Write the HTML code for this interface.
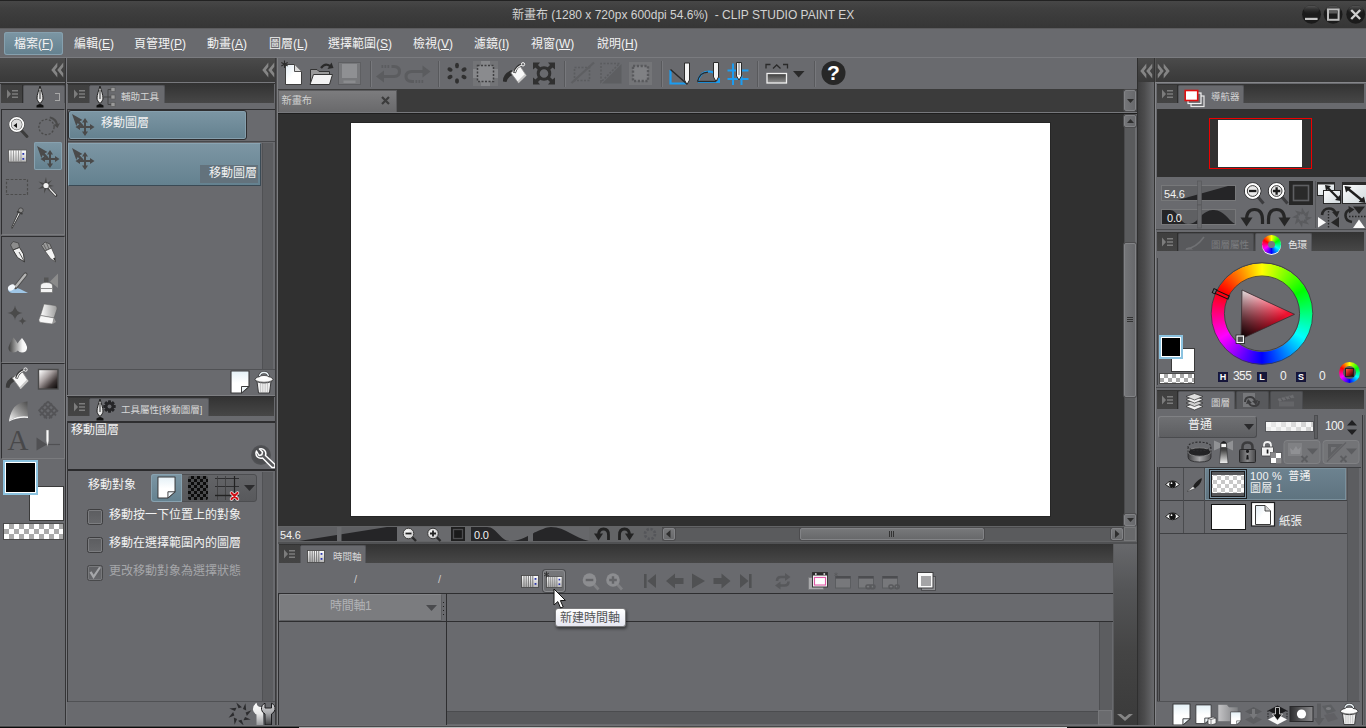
<!DOCTYPE html>
<html lang="zh-Hant">
<head>
<meta charset="utf-8">
<title>CLIP STUDIO PAINT EX</title>
<style>
html,body{margin:0;padding:0;}
body{width:1366px;height:728px;overflow:hidden;position:relative;background:#696a6e;
 font-family:"Liberation Sans","Noto Sans CJK TC",sans-serif;color:#f2f2f2;font-size:12px;}
.a{position:absolute;}
.t{position:absolute;white-space:nowrap;line-height:1;}
svg{position:absolute;overflow:visible;}
.dk{background:linear-gradient(#333,#474747);}
.strip{background:linear-gradient(#4b4b4b 0,#424242 45%,#393939 100%);}
.pm{position:absolute;width:21px;height:18px;background:linear-gradient(#3f3f3f,#444);border-right:1px solid #2e2e2e;}
.tab{position:absolute;background:#696a6e;border:1px solid #55565a;border-bottom:none;border-radius:2px 2px 0 0;box-sizing:border-box;}
.tabi{position:absolute;background:#58595c;border:1px solid #4a4b4e;border-bottom:none;border-radius:2px 2px 0 0;box-sizing:border-box;}
.ln{position:absolute;background:#3b3b3d;}
.ll{position:absolute;background:#7d7e82;}
.cb{width:16px;height:16px;box-sizing:border-box;border:1px solid #3e3e40;border-radius:2.500px;background:linear-gradient(#5c5d60,#67686b);box-shadow:inset 0 0 0 1px #7c7d80;}
.sb{box-sizing:border-box;background:linear-gradient(90deg,#747578,#68696c);border:1px solid #828386;border-radius:2px;box-shadow:0 0 0 1px #4c4c4e;}
.hls{width:10px;height:10px;background:#16163a;color:#fff;font-size:9px;line-height:10px;text-align:center;font-weight:bold;font-family:'Liberation Sans',sans-serif;}
.sel{background:linear-gradient(#7c96a4,#64818f);}
</style>
</head>
<body>

<!-- ===== TITLE BAR ===== -->
<div class="a" id="title" style="left:0;top:0;width:1366px;height:29px;background:linear-gradient(#484848 0,#3f3f3f 30%,#353535 100%);"></div>
<div class="a" style="left:0;top:28px;width:1366px;height:1px;background:#5c5c5e;"></div>
<div class="t" style="left:512px;top:9px;font-size:12px;color:#d2d2d2;">新畫布 (1280 x 720px 600dpi 54.6%)&nbsp; - CLIP STUDIO PAINT EX</div>

<svg style="left:1296px;top:0" width="70" height="29">
 <defs><linearGradient id="gBtn" x1="0" y1="0" x2="0" y2="1"><stop offset="0" stop-color="#5a5a5a"/><stop offset="1" stop-color="#2a2a2a" stop-opacity="0"/></linearGradient></defs>
 <circle cx="15.500" cy="14.300" r="9.400" fill="#1b1b1b"/><circle cx="37.100" cy="14.300" r="9.400" fill="#1b1b1b"/><circle cx="59.700" cy="14.300" r="9.400" fill="#1b1b1b"/>
 <ellipse cx="15.500" cy="10" rx="7.600" ry="4.600" fill="url(#gBtn)"/><ellipse cx="37.100" cy="10" rx="7.600" ry="4.600" fill="url(#gBtn)"/><ellipse cx="59.700" cy="10" rx="7.600" ry="4.600" fill="url(#gBtn)"/>
 <rect x="9" y="17.800" width="12.600" height="2.200" fill="#c6c6c6"/>
 <rect x="32" y="9.500" width="10.600" height="10.300" fill="#1a1a1a" stroke="#bcbcbc" stroke-width="2"/><rect x="33" y="10.500" width="8.600" height="3" fill="#5a5a5a"/>
 <path d="M55.200 10 L64.200 19 M64.200 10 L55.200 19" stroke="#cdcdcd" stroke-width="2.400"/>
</svg>
<div class="a" style="left:0;top:0;width:1366px;height:1px;background:#222;"></div>

<!-- ===== MENU BAR ===== -->
<div class="a" id="menu" style="left:0;top:29px;width:1366px;height:29px;background:#696a6e;"></div>
<div class="a sel" style="left:4px;top:32px;width:59px;height:23px;border-radius:3px;box-shadow:inset 0 0 0 1px #86a0ae;"></div>
<div class="t" style="left:14px;top:38px;font-size:12px;">檔案(<u>F</u>)</div>
<div class="t" style="left:74px;top:38px;font-size:12px;">編輯(<u>E</u>)</div>
<div class="t" style="left:134px;top:38px;font-size:12px;">頁管理(<u>P</u>)</div>
<div class="t" style="left:207px;top:38px;font-size:12px;">動畫(<u>A</u>)</div>
<div class="t" style="left:269px;top:38px;font-size:12px;">圖層(<u>L</u>)</div>
<div class="t" style="left:328px;top:38px;font-size:12px;">選擇範圍(<u>S</u>)</div>
<div class="t" style="left:413px;top:38px;font-size:12px;">檢視(<u>V</u>)</div>
<div class="t" style="left:474px;top:38px;font-size:12px;">濾鏡(<u>I</u>)</div>
<div class="t" style="left:531px;top:38px;font-size:12px;">視窗(<u>W</u>)</div>
<div class="t" style="left:597px;top:38px;font-size:12px;">說明(<u>H</u>)</div>

<!-- ===== DOCK HEADERS (y 58-82) ===== -->
<div class="a" style="left:0;top:57px;width:1366px;height:1px;background:#7a7b7f;"></div>
<div class="a strip" style="left:0;top:58px;width:66px;height:24px;"></div>
<div class="a strip" style="left:67px;top:58px;width:208px;height:24px;"></div>
<div class="a" style="left:65px;top:58px;width:1px;height:667px;background:#343436;"></div><div class="a" style="left:66px;top:58px;width:1px;height:667px;background:#77787c;"></div>
<div class="a" style="left:0;top:82px;width:65px;height:1px;background:#77787c;"></div><div class="a" style="left:67px;top:82px;width:209px;height:1px;background:#77787c;"></div><div class="a" style="left:0;top:83px;width:65px;height:1px;background:#333;"></div><div class="a" style="left:67px;top:83px;width:209px;height:1px;background:#333;"></div>


<!-- ===== shared svg symbols ===== -->
<svg width="0" height="0" style="left:0;top:0">
 <defs>
  <symbol id="pmenu" viewBox="0 0 22 18"><path d="M6 4.5 L10 9 L6 13.5 Z" fill="#7c7c7c"/><path d="M11 5h6v1.400h-6zM11 8.300h6v1.400h-6zM11 11.600h6v1.400h-6z" fill="#7c7c7c"/></symbol>
  <symbol id="chevL" viewBox="0 0 14 16"><path d="M6.800 0 L0.300 8 L6.800 16 L6.800 11.500 L4.200 8 L6.800 4.500Z M13.200 0 L6.700 8 L13.200 16 L13.200 11.500 L10.600 8 L13.200 4.500Z" fill="#858585"/></symbol>
  <symbol id="chevR" viewBox="0 0 14 16"><path d="M0.800 0 L7.300 8 L0.800 16 L0.800 11.500 L3.400 8 L0.800 4.500Z M7.200 0 L13.700 8 L7.200 16 L7.200 11.500 L9.800 8 L7.200 4.500Z" fill="#858585"/></symbol>
  <symbol id="pen" viewBox="0 0 10 22"><path d="M5 0 C3.5 5 2 9 2 12 C2 14.500 3.500 15.500 4.200 17 L5.800 17 C6.500 15.500 8 14.500 8 12 C8 9 6.500 5 5 0Z" fill="#e8e8e8" stroke="#222" stroke-width="1"/><path d="M5 4 L5 13" stroke="#333" stroke-width="1"/><path d="M1.500 19.500 Q5 16.500 8.500 19.500 L8.500 21.500 L1.500 21.500Z" fill="#111"/></symbol>
  <symbol id="mvl" viewBox="0 0 24 24"><path d="M1 2 L11.500 8 L8.600 9.300 L12.600 13.600 L10.600 15.200 L6.800 10.900 L5.300 14Z" fill="#4a4a4a"/><path d="M14 6 L17 10.500 L15 10.500 L15 14 L19 14 L19 12 L23.500 15 L19 18 L19 16 L15 16 L15 19.500 L17 19.500 L14 24 L11 19.500 L13 19.500 L13 16 L9 16 L9 18 L4.500 15 L9 12 L9 14 L13 14 L13 10.500 L11 10.500Z" fill="#4a4a4a"/></symbol>
  <linearGradient id="gPaper" x1="0" y1="0" x2="0" y2="1"><stop offset="0" stop-color="#e4f0f6"/><stop offset=".55" stop-color="#ffffff"/><stop offset="1" stop-color="#ffffff"/></linearGradient>
  <symbol id="paper" viewBox="0 0 20 24"><path d="M1 1 L19 1 L19 16.500 L11.500 23 L1 23Z" fill="url(#gPaper)" stroke="#3a3a3c" stroke-width="1.100" stroke-linejoin="round"/><path d="M11.500 23 L11.500 16.500 L19 16.500Z" fill="#eef5f8" stroke="#3a3a3c" stroke-width="1" stroke-linejoin="round"/></symbol>
  <symbol id="trash" viewBox="0 0 20 23"><path d="M5.500 6 Q5.500 1.500 10 1.500 Q14.500 1.500 14.500 6" fill="none" stroke="#3a3a3c" stroke-width="2.600"/><path d="M5.500 6 Q5.500 1.500 10 1.500 Q14.500 1.500 14.500 6" fill="none" stroke="#e6eef2" stroke-width="1.300"/><path d="M3 10.500 L17 10.500 L15.500 22 L4.500 22Z" fill="#ececec" stroke="#3a3a3c" stroke-width="1"/><path d="M6.500 12v9M8.800 12v9M11.200 12v9M13.500 12v9" stroke="#c4c4c4" stroke-width=".9"/><ellipse cx="10" cy="8.500" rx="9" ry="3.400" fill="#fafafa" stroke="#3a3a3c" stroke-width="1"/><path d="M1.500 9.500 Q10 13 18.500 9.500" fill="none" stroke="#555" stroke-width=".7"/><ellipse cx="10" cy="6.300" rx="4" ry="1.400" fill="#fff"/></symbol>
  <symbol id="wrench" viewBox="0 0 22 22"><path d="M3.500 4 Q2 7.500 4.500 10 Q6.500 11.800 9.500 11 L19 20.500 L22 20.500 L22 17.500 L12.500 8.500 Q13.500 5.500 11.500 3.300 Q9.500 1.200 6.500 2 L9.500 5 L8.800 7.800 L6 8.500 L3.500 4Z" fill="#58595c" stroke="#fff" stroke-width="1.500" stroke-linejoin="round"/></symbol>
 </defs>
</svg>

<!-- ===== LEFT: TOOL PALETTE (x 0-65) ===== -->
<svg style="left:51px;top:62px" width="13" height="16"><use href="#chevL"/></svg>
<svg style="left:262px;top:62px" width="13" height="16"><use href="#chevL"/></svg>
<div class="a dk" style="left:1px;top:84px;width:64px;height:19px;"></div>
<div class="pm" style="left:1px;top:85px;"><svg width="22" height="18" style="left:0;top:0"><use href="#pmenu"/></svg></div>
<div class="tab" style="left:23px;top:85px;width:42px;height:18px;"></div>
<svg style="left:35px;top:86px" width="10" height="22"><use href="#pen"/></svg>
<div class="a" style="left:55px;top:93px;width:4px;height:6px;border:1px solid #a8a8a8;border-left:none;"></div>
<!-- tool group boxes -->
<div class="a" style="left:1px;top:109px;width:64px;height:126px;border:1px solid #2e2e30;border-right-color:#7a7b7e;border-bottom-color:#7a7b7e;box-sizing:border-box;"></div>
<div class="a" style="left:1px;top:236px;width:64px;height:127px;border:1px solid #2e2e30;border-right-color:#7a7b7e;border-bottom-color:#7a7b7e;box-sizing:border-box;"></div>
<div class="a" style="left:1px;top:363px;width:64px;height:96px;border:1px solid #2e2e30;border-right-color:#7a7b7e;border-bottom-color:#7a7b7e;box-sizing:border-box;"></div>
<!-- selected tool -->
<div class="a sel" style="left:34px;top:142px;width:28px;height:28px;border-radius:2px;box-shadow:inset 0 0 0 1px #87a1af;"></div>

<svg style="left:0;top:0" width="66" height="460">
 <defs>
  <linearGradient id="gW" x1="0" y1="0" x2="0" y2="1"><stop offset="0" stop-color="#fff"/><stop offset="1" stop-color="#b8b8b8"/></linearGradient>
  <linearGradient id="gWh" x1="0" y1="0" x2="1" y2="0"><stop offset="0" stop-color="#fff"/><stop offset="1" stop-color="#9a9a9a"/></linearGradient>
  <linearGradient id="gBK" x1="0" y1="0" x2="1" y2="1"><stop offset="0.05" stop-color="#fff"/><stop offset=".4" stop-color="#a8a0a0"/><stop offset=".72" stop-color="#3a3232"/><stop offset="1" stop-color="#050303"/></linearGradient>
  <linearGradient id="gDrop" x1="0" y1="0" x2="1" y2="0"><stop offset="0" stop-color="#3c3c3c"/><stop offset=".75" stop-color="#f4f4f4"/><stop offset="1" stop-color="#fff"/></linearGradient>
  <linearGradient id="gFig" x1="0" y1="1" x2="1" y2="0"><stop offset="0" stop-color="#fafafa"/><stop offset=".45" stop-color="#9d9d9d"/><stop offset="1" stop-color="#4a4a4a"/></linearGradient>
 </defs>
 <!-- magnifier -->
 <path d="M21 130 L27 136.500" stroke="#3c3c3c" stroke-width="3" stroke-linecap="round"/>
 <circle cx="16.700" cy="124.500" r="6.600" fill="#dcdcdc" stroke="#3f3f3f" stroke-width="2.800"/>
 <circle cx="16.700" cy="124.500" r="6.600" fill="none" stroke="#fff" stroke-width="1.800"/>
 <path d="M13.500 125.500 L17 123 L17 128Z" fill="#111"/>
 <!-- rotate -->
 <circle cx="46.500" cy="127" r="7.600" fill="none" stroke="#4a4a4a" stroke-width="1.300" stroke-dasharray="2.200 1.600"/>
 <path d="M50 116.500 Q57 118 58 124 L60 123 L57.500 128 L53.500 124.500 L55.800 124.300 Q55 120 49.500 118.200Z" fill="#4a4a4a"/>
 <!-- film -->
 <rect x="8.500" y="150" width="18" height="12" fill="url(#gW)" stroke="#555" stroke-width=".8"/>
 <path d="M11 150v12M13.500 150v12M16 150v12M18.500 150v12M21 150v12" stroke="#8a8a8a" stroke-width=".8"/>
 <rect x="22.400" y="153" width="1.800" height="1.800" fill="#2a35b0"/><rect x="22.400" y="158" width="1.800" height="1.800" fill="#2a35b0"/>
 <!-- move layer (selected) -->
 <use href="#mvl" x="36" y="144" width="24" height="24"/>
 <!-- dashed rect -->
 <rect x="6.500" y="179.500" width="21" height="15" fill="none" stroke="#4c4c4c" stroke-width="1.200" stroke-dasharray="2.600 1.600"/>
 <!-- magic wand -->
 <path d="M48 187 L56 195.500" stroke="#3e3e3e" stroke-width="2.600" stroke-linecap="round"/>
 <path d="M48.500 187.500 L55.500 195" stroke="#ececec" stroke-width="1.200" stroke-linecap="round"/>
 <path d="M46 177 L47 183 L52 180 L48.500 184.500 L54 186 L48.500 187 L50.500 192 L46.500 188.500 L44 193.500 L44.200 188 L38 189 L43 185.500 L38.500 181.500 L44.200 183.200Z" fill="#4a4a4a"/>
 <circle cx="46" cy="185.500" r="2.600" fill="#f2f2f2"/>
 <!-- eyedropper -->
 <path d="M20.500 213 L12 228.500 L11.500 227.500 L18.500 212Z" fill="#e4e4e4" stroke="#3c3c3c" stroke-width="1"/>
 <path d="M17 211.500 L22.500 214" stroke="#3c3c3c" stroke-width="1.600"/>
 <circle cx="20.800" cy="210.300" r="2.400" fill="#8a8a8a" stroke="#3c3c3c" stroke-width=".8"/>

 <!-- pen nib -->
 <path d="M10.500 245 L13 241.500 L18.500 243 L19.500 247.500 L13 250Z" fill="#8c8c8c" stroke="#444" stroke-width=".8"/>
 <path d="M13 250 L19.500 247.500 L23.500 254 L24.500 262 L17.500 257.500Z" fill="#f0f0f0" stroke="#3a3a3a" stroke-width="1"/>
 <path d="M19 252 L24 261" stroke="#444" stroke-width=".9"/>
 <!-- pencil -->
 <path d="M41.500 245.500 L45 242 L50 244 L51.500 248 L45 251Z" fill="#9a9a9a" stroke="#444" stroke-width=".8"/>
 <path d="M43.500 244 L46.500 250M46.500 243 L49 249" stroke="#555" stroke-width=".8"/>
 <path d="M45 251 L51.500 248 L55 256 L55.500 262 L50.500 258.500Z" fill="#f4f4f4" stroke="#4a4a4a" stroke-width=".8"/>
 <path d="M53 258.500 L55.500 262 L55.200 257.500Z" fill="#333"/>
 <!-- brush -->
 <path d="M8 289 Q14 286 20 289 L28 293 L12 293 Q8 292 8 289Z" fill="#9fc6e6"/>
 <path d="M25.500 274.500 L15.500 287" stroke="#4c4c4c" stroke-width="4.200" stroke-linecap="round"/>
 <path d="M25.300 274.700 L16 286.300" stroke="#b4b4b4" stroke-width="2.400" stroke-linecap="round"/>
 <ellipse cx="11.500" cy="287.500" rx="3.800" ry="2.800" fill="#f4f8fc" transform="rotate(-35 11.500 287.500)"/>
 <!-- airbrush -->
 <path d="M50 281.500 L58 273.500 L58 288Z" fill="#8b8b8b"/>
 <rect x="44" y="277.500" width="4.500" height="5" fill="#555"/>
 <path d="M40.500 286 Q40.500 282.500 46.500 282.500 Q52.500 282.500 52.500 286 L52.500 292.500 L40.500 292.500Z" fill="#f4f4f4" stroke="#6a6a6a" stroke-width=".6"/>
 <path d="M40.500 288.500 L52.500 288.500" stroke="#8a8a8a" stroke-width="1"/>
 <!-- sparkles -->
 <path d="M15 305.500 Q15.800 312.200 22.500 313 Q15.800 313.800 15 320.500 Q14.200 313.800 7.500 313 Q14.200 312.200 15 305.500Z" fill="#4a4a4a"/>
 <path d="M22.500 317 Q23 320.500 26.500 321 Q23 321.500 22.500 325 Q22 321.500 18.500 321 Q22 320.500 22.500 317Z" fill="#4a4a4a"/>
 <!-- eraser -->
 <path d="M44 304 L55 305.500 Q57.500 306 57 309 L54 318 L40.500 315.500Z" fill="url(#gWh)" stroke="#5a5a5a" stroke-width=".5"/>
 <path d="M40.500 315.500 L54 318 L52.500 324 L41 322.500 Q38.500 322 39 319.500Z" fill="#f6f6f6" stroke="#6a6a6a" stroke-width=".5"/>
 <path d="M52.500 324 L56 322 L54 318Z" fill="#9a9a9a"/>
 <!-- blend drops -->
 <path d="M13.500 337.500 Q17 342 17.500 343.500 Q19 341 22 338 Q27.500 345 27 348.500 Q26.500 352.500 22 352.500 Q19 352.500 17.800 350.500 Q16.500 352.500 13 352.500 Q8.500 352 8.500 348 Q9 343.500 13.500 337.500Z" fill="url(#gDrop)"/>

 <!-- bucket -->
 <path d="M5.800 387.500 Q5.300 380 14 376 L16.500 380.500 Q10 382.500 9.200 388Z" fill="#3a3a3a"/>
 <path d="M12.300 378 L22 371.300 L28.300 381 L20.500 389 Z" fill="#f8f8f8" stroke="#8a8a8a" stroke-width=".8" stroke-linejoin="round"/>
 <path d="M20.500 389 L28.300 381 L27 379.500 L19.800 387Z" fill="#c9c9c9"/>
 <path d="M16.500 378.500 Q18 371.500 25 369.800" fill="none" stroke="#333" stroke-width="2.800"/>
 <path d="M16.800 378 Q18.500 372 25 370.300" fill="none" stroke="#efefef" stroke-width="1.100"/>
 <circle cx="25.500" cy="369.600" r="1.700" fill="#6a6b6e" stroke="#f0f0f0" stroke-width="1"/>
 <!-- gradient square -->
 <rect x="38.500" y="369.500" width="19.500" height="19.500" fill="url(#gBK)" stroke="#4a4a4a" stroke-width="1.400"/>
 <!-- figure curve -->
 <path d="M27.500 401.500 Q12 402 9 420.500 Q18 415 28 416.500 Q27 409 27.500 401.500Z" fill="url(#gFig)"/>
 <path d="M9 420.500 Q18 415 28 416.500 L28 418 Q18 417 9 421.500Z" fill="#fafafa"/>
 <!-- hatch -->
 <g stroke="#515154" stroke-width="1.800" opacity=".85"><path d="M41 407 L52 418M44 403.500 L56 415.500M48 401.500 L58 411.500M39.500 411 L47 418.500"/><path d="M55 407 L44 418M52 403.500 L40 415.500M48 401.500 L38.500 411M56.500 411 L49 418.500"/></g>
 <!-- correct line -->
 <path d="M36.500 437.500 L47 444.500 L36.500 450.500Z" fill="#505053"/>
 <path d="M47 444.500 L60 444.500" stroke="#505053" stroke-width="1.200"/>
 <path d="M46.200 430 L48.800 430 L48.800 441 L47.500 446.500 L46.200 441Z" fill="#fafafa" stroke="#777" stroke-width=".4"/>
</svg>
<div class="t" style="left:7.500px;top:426px;font-family:'Liberation Serif',serif;font-size:29px;color:#48484a;">A</div>


<!-- colour swatches -->
<div class="a" style="left:29px;top:486px;width:35px;height:35px;background:#fff;border:1px solid #3a3a3a;box-sizing:border-box;"></div>
<div class="a" style="left:3px;top:460px;width:35px;height:35px;background:#000;border:2px solid #8cc3e0;box-shadow:inset 0 0 0 1px #fff;box-sizing:border-box;"></div>
<div class="a" style="left:3px;top:523px;width:61px;height:17px;border:1px solid #4a4a4a;box-sizing:border-box;background-color:#fff;background-image:linear-gradient(45deg,#a9a9a9 25%,transparent 25%,transparent 75%,#a9a9a9 75%),linear-gradient(45deg,#a9a9a9 25%,transparent 25%,transparent 75%,#a9a9a9 75%);background-size:10px 10px;background-position:0 0,5px 5px;"></div>

<!-- ===== LEFT: SUB TOOL PANEL (x 67-276) ===== -->
<div class="a dk" style="left:68px;top:84px;width:206px;height:19px;"></div>
<div class="pm" style="left:68px;top:85px;"><svg width="22" height="18" style="left:0;top:0"><use href="#pmenu"/></svg></div>
<div class="tab" style="left:89px;top:85px;width:76px;height:18px;"></div>
<svg style="left:95px;top:86px" width="10" height="22"><use href="#pen"/></svg>
<svg style="left:104px;top:87px" width="14" height="20"><path d="M0 10h4M4 2.500h3M4 10h3M4 17.500h3M4 2.500v15" stroke="#444" stroke-width="1" fill="none"/><rect x="7" y="0.500" width="4" height="4" fill="#9a9a9a" stroke="#555" stroke-width=".6"/><rect x="7" y="8" width="4" height="4" fill="#9a9a9a" stroke="#555" stroke-width=".6"/><rect x="7" y="15.500" width="4" height="4" fill="#9a9a9a" stroke="#555" stroke-width=".6"/></svg>
<div class="t" style="left:121px;top:92px;font-size:9.500px;color:#d6d6d6;">輔助工具</div>
<div class="a" style="left:67px;top:109px;width:208px;height:1px;background:#2e2e30;"></div><div class="a" style="left:67px;top:109px;width:1px;height:286px;background:#353537;"></div>

<!-- group box -->
<div class="a sel" style="left:68px;top:110px;width:179px;height:30px;border-radius:3px;border:1px solid #2e2e30;box-sizing:border-box;box-shadow:inset 0 0 0 1px #869fad;"></div>
<svg style="left:71px;top:112px" width="24" height="24"><use href="#mvl"/></svg>
<div class="t" style="left:101px;top:117px;font-size:12px;">移動圖層</div>
<div class="a" style="left:68px;top:141px;width:207px;height:1px;background:#47484b;"></div>
<!-- sub tool item -->
<div class="a sel" style="left:68px;top:143px;width:193px;height:43px;border:1px solid #3a4a55;border-top-color:#8aa4b2;border-left-color:#8aa4b2;box-sizing:border-box;"></div>
<svg style="left:71px;top:146px" width="24" height="24"><use href="#mvl"/></svg>
<div class="a" style="left:200px;top:165px;width:58px;height:18px;background:#63727c;"></div>
<div class="t" style="left:209px;top:167px;font-size:12px;">移動圖層</div>
<div class="a" style="left:262px;top:143px;width:11px;height:226px;background:#5c5d60;border-left:1px solid #505154;box-sizing:border-box;"></div>
<div class="a" style="left:68px;top:369px;width:207px;height:1px;background:#505154;"></div>
<svg style="left:230px;top:370px" width="20" height="24"><use href="#paper"/></svg>
<svg style="left:254px;top:371px" width="20" height="23"><use href="#trash"/></svg>
<div class="a" style="left:67px;top:395px;width:208px;height:1px;background:#7e7f82;"></div><div class="a" style="left:67px;top:396px;width:208px;height:1px;background:#2e2e30;"></div>

<!-- ===== LEFT: TOOL PROPERTY PANEL ===== -->
<div class="a dk" style="left:68px;top:397px;width:206px;height:19px;"></div>
<div class="pm" style="left:68px;top:398px;"><svg width="22" height="18" style="left:0;top:0"><use href="#pmenu"/></svg></div>
<div class="tab" style="left:89px;top:398px;width:120px;height:18px;"></div>
<svg style="left:95px;top:399px" width="10" height="22"><use href="#pen"/></svg>
<svg style="left:103px;top:400px" width="13" height="13"><g fill="#252527"><circle cx="6.500" cy="6.500" r="4.600"/><g id="gt"><rect x="5" y="0.300" width="3" height="12.400" rx=".4"/><rect x="5" y="0.300" width="3" height="12.400" rx=".4" transform="rotate(45 6.500 6.500)"/><rect x="5" y="0.300" width="3" height="12.400" rx=".4" transform="rotate(90 6.500 6.500)"/><rect x="5" y="0.300" width="3" height="12.400" rx=".4" transform="rotate(135 6.500 6.500)"/></g></g><circle cx="6.500" cy="6.500" r="2" fill="#696a6e"/></svg>
<div class="t" style="left:121px;top:405px;font-size:9.500px;color:#d6d6d6;">工具屬性[移動圖層]</div>
<div class="a" style="left:67px;top:421px;width:208px;height:2px;background:#2e2e30;"></div><div class="a" style="left:67px;top:421px;width:1px;height:281px;background:#353537;"></div>

<div class="t" style="left:71px;top:424px;font-size:12px;">移動圖層</div>
<div class="a" style="left:68px;top:469px;width:207px;height:2px;background:#2a2a2c;"></div>
<div class="t" style="left:88px;top:479px;font-size:12px;">移動對象</div>
<div class="a" style="left:151px;top:474px;width:106px;height:28px;border-radius:3px;background:linear-gradient(#636467,#58595c);border:1px solid #4c4d50;box-sizing:border-box;"></div>
<div class="a sel" style="left:151px;top:474px;width:31px;height:28px;border-radius:3px 0 0 3px;box-shadow:inset 0 0 0 1px #88a2b0;"></div>
<div class="a" style="left:251px;top:445px;width:20px;height:20px;border-radius:50%;background:radial-gradient(circle,#4c4d50 55%,#5f6063 100%);"></div>
<svg style="left:253px;top:447px" width="22" height="22"><use href="#wrench"/></svg>
<svg style="left:157px;top:475px" width="19" height="25"><use href="#paper" width="19" height="25"/></svg>
<div class="a" style="left:188px;top:476px;width:20px;height:24px;background-color:#4a4b4d;background-image:linear-gradient(45deg,#0c0c0c 25%,transparent 25%,transparent 75%,#0c0c0c 75%),linear-gradient(45deg,#0c0c0c 25%,transparent 25%,transparent 75%,#0c0c0c 75%);background-size:6px 6px;background-position:0 0,3px 3px;border-radius:2px;"></div>
<svg style="left:214px;top:475px" width="44" height="26"><path d="M1 3.500h24M1 11.500h24M1 20.500h24" stroke="#2e2e30" stroke-width="1"/><path d="M3.500 1v24M11.500 1v24" stroke="#3c3c3e" stroke-width=".8"/><path d="M20.500 1v24" stroke="#222" stroke-width="1.200"/><path d="M1 20.500h17" stroke="#222" stroke-width="1.400"/><path d="M17.500 18 L23.500 24 M23.500 18 L17.500 24" stroke="#fff" stroke-width="3.400" stroke-linecap="round"/><path d="M17.500 18 L23.500 24 M23.500 18 L17.500 24" stroke="#d01218" stroke-width="2.200" stroke-linecap="round"/><path d="M30 10 L41 10 L35.500 16Z" fill="#2c2c2e"/></svg>
<!-- prop bottom icons -->
<svg style="left:228px;top:702px" width="24" height="24"><g fill="#2c2c2e"><path d="M12 0.500 L14 7.500 L10.500 6.500Z" transform="rotate(10 12 12) translate(3.5 0)"/><path d="M12 0.500 L14 7.500 L10.500 6.500Z" transform="rotate(55 12 12) translate(3.5 0)"/><path d="M12 0.500 L14 7.500 L10.500 6.500Z" transform="rotate(100 12 12) translate(3.5 0)"/><path d="M12 0.500 L14 7.500 L10.500 6.500Z" transform="rotate(145 12 12) translate(3.5 0)"/><path d="M12 0.500 L14 7.500 L10.500 6.500Z" transform="rotate(190 12 12) translate(3.5 0)"/><path d="M12 0.500 L14 7.500 L10.500 6.500Z" transform="rotate(235 12 12) translate(3.5 0)"/><path d="M12 0.500 L14 7.500 L10.500 6.500Z" transform="rotate(280 12 12) translate(3.5 0)"/><path d="M12 0.500 L14 7.500 L10.500 6.500Z" transform="rotate(325 12 12) translate(3.5 0)"/></g></svg>
<svg style="left:252px;top:702px" width="24" height="24"><defs><linearGradient id="gWr1" x1="0" y1="0" x2="0" y2="1"><stop offset="0" stop-color="#fff"/><stop offset=".5" stop-color="#e8e8e8"/><stop offset="1" stop-color="#98999c"/></linearGradient><linearGradient id="gWr2" x1="0" y1="0" x2="0" y2="1"><stop offset="0" stop-color="#d8d8da"/><stop offset=".45" stop-color="#a8a9ac"/><stop offset="1" stop-color="#3c3c3e"/></linearGradient></defs>
<path d="M4.500 0.800 Q0.500 3.500 1 8 Q1.500 11 4.500 12.500 L4.500 23 L11 23 L11 12.500 L11 5 L8 5 Q5 4.500 4.500 0.800Z" fill="url(#gWr1)"/>
<path d="M13 1.200 Q9 3 9.500 7.500 Q10 10.500 13 12 L13 23 L19.500 23 L19.500 12 Q22.500 10.500 23 7.500 Q23.500 3 19.500 1.200 L19.500 6 L13 6Z" fill="url(#gWr2)" stroke="#1c1c1e" stroke-width="1" stroke-linejoin="round"/></svg>
<div class="a cb" style="left:87px;top:509px;"></div>
<div class="t" style="left:109px;top:509px;font-size:12px;">移動按一下位置上的對象</div>
<div class="a cb" style="left:87px;top:537px;"></div>
<div class="t" style="left:109px;top:537px;font-size:12px;">移動在選擇範圍內的圖層</div>
<div class="a cb" style="left:87px;top:565px;opacity:.75"></div>
<svg style="left:88px;top:566px" width="14" height="14"><path d="M1.500 6.500 L5.500 13 L13 1.500 L11 1 L5.700 8.800 L3.500 5.200Z" fill="#a6a7aa"/></svg>
<div class="t" style="left:109px;top:565px;font-size:12px;color:#a5a6a9;">更改移動對象為選擇狀態</div>
<div class="a" style="left:262px;top:472px;width:11px;height:229px;background:#5c5d60;border-left:1px solid #505154;box-sizing:border-box;"></div>
<div class="a" style="left:68px;top:701px;width:207px;height:1px;background:#505154;"></div>


<!-- ===== CENTER: toolbar / doc tabs / canvas ===== -->
<div class="a" id="toolbar" style="left:278px;top:58px;width:860px;height:31px;background:#696a6e;"></div>
<div class="a" style="left:275px;top:58px;width:1px;height:667px;background:#3a3a3c;"></div><div class="a" style="left:276px;top:58px;width:1px;height:667px;background:#4e4e50;"></div><div class="a" style="left:277px;top:58px;width:1px;height:667px;background:#7c7d80;"></div>
<div class="a" id="doctabs" style="left:278px;top:89px;width:860px;height:23px;background:#3b3b3b;"></div>
<div class="a" style="left:278px;top:112px;width:860px;height:1px;background:#77787c;"></div><div class="a" style="left:278px;top:113px;width:860px;height:1px;background:#1e1e1e;"></div>
<div class="a" id="canvasarea" style="left:278px;top:114px;width:846px;height:412px;background:#303030;"></div>
<div class="a" id="canvas" style="left:351px;top:123px;width:699px;height:393px;background:#fff;box-shadow:0 0 0 1px #262626;"></div>


<!-- toolbar icons -->
<svg style="left:0;top:0" width="1140" height="90">
 <defs>
  <linearGradient id="gDoc" x1="0" y1="0" x2="1" y2="1"><stop offset="0" stop-color="#dfeaf2"/><stop offset=".5" stop-color="#fff"/><stop offset="1" stop-color="#fff"/></linearGradient>
  <linearGradient id="gRect" x1="0" y1="0" x2="0" y2="1"><stop offset="0" stop-color="#3a3a3a"/><stop offset="1" stop-color="#909090"/></linearGradient>
 </defs>
 <!-- new -->
 <path d="M285.500 64.500 L294.500 64.500 L301.500 71.500 L301.500 84.500 L285.500 84.500Z" fill="url(#gDoc)" stroke="#3e3e3e" stroke-width="1"/>
 <path d="M294.500 64.500 L294.500 71.500 L301.500 71.500" fill="#d8d8d8" stroke="#3e3e3e" stroke-width=".9"/>
 <path d="M284.500 60.500v7.500M281.300 62.400l6.400 3.700M281.300 66.100l6.400-3.700" stroke="#2c2c2c" stroke-width="1.100"/>
 <!-- open -->
 <path d="M310.500 84 L310.500 69.500 L317 69.500 L319 71.500 L329.500 71.500 L329.500 74" fill="#9a9a9a" stroke="#333" stroke-width="1"/>
 <path d="M313.500 74.500 L332.500 74.500 L329.500 84.500 L310 84.500Z" fill="#f2f2f2" stroke="#333" stroke-width="1"/>
 <path d="M321 68 Q325 62.500 330 66" fill="none" stroke="#2a2a2a" stroke-width="2.200"/>
 <path d="M327.500 69 L333.500 68 L331.500 62.500Z" fill="#2a2a2a"/>
 <!-- save (disabled) -->
 <rect x="338.500" y="62.500" width="22" height="22" fill="#77787b" stroke="#5e5f62" stroke-width="1"/>
 <rect x="342" y="64" width="15" height="14" fill="#8f9093"/>
 <rect x="343.500" y="80.500" width="12" height="2.600" fill="#8a8b8e"/>
 <path d="M370.500 61v26" stroke="#58595c" stroke-width="1"/><path d="M371.500 61v26" stroke="#77787c" stroke-width="1"/>
 <!-- undo / redo (disabled) -->
 <g fill="none" stroke="#5b5c5f" stroke-width="3"><path d="M383 76.500 L394 76.500 Q399.500 76.500 399.500 71.500 Q399.500 66.500 394 66.500 L391.500 66.500"/><path d="M381.500 66.500 L390.500 66.500" stroke-dasharray="1.700 1.300"/></g>
 <path d="M376 76.500 L384 70.500 L384 82.500Z" fill="#5b5c5f"/>
 <g fill="none" stroke="#5b5c5f" stroke-width="3"><path d="M423 71.500 L412 71.500 Q406 71.500 406 76.500 Q406 81.500 412 81.500 L414 81.500"/><path d="M415.500 81.500 L424 81.500" stroke-dasharray="1.700 1.300"/></g>
 <path d="M430.500 71.500 L422.500 65.500 L422.500 77.500Z" fill="#5b5c5f"/>
 <path d="M438.500 61v26" stroke="#58595c" stroke-width="1"/><path d="M439.500 61v26" stroke="#77787c" stroke-width="1"/>
 <!-- clear dots -->
 <g fill="#303030"><ellipse cx="457" cy="65.500" rx="2" ry="2.700"/><ellipse cx="457" cy="81" rx="2" ry="2.700"/><ellipse cx="450" cy="69.500" rx="2.700" ry="2" transform="rotate(30 450 69.500)"/><ellipse cx="464" cy="69.500" rx="2.700" ry="2" transform="rotate(-30 464 69.500)"/><ellipse cx="450" cy="77" rx="2.700" ry="2" transform="rotate(-30 450 77)"/><ellipse cx="464" cy="77" rx="2.700" ry="2" transform="rotate(30 464 77)"/></g>
 <!-- selection border -->
 <rect x="473" y="61" width="25" height="25" fill="#737477"/>
 <path d="M481 61h9v25h-9zM473 69h25v9h-25z" fill="#86878a"/>
 <rect x="477.500" y="65.500" width="16" height="16" fill="#8a8b8e" stroke="#3f3f41" stroke-width="1.500" stroke-dasharray="2 1.500"/>
 <!-- bucket -->
 <path d="M503 81.500 Q502.500 74 511.500 70 L514 74.500 Q507.500 76.500 506.500 82Z" fill="#2c2c2c"/>
 <path d="M510.800 72.800 L520.200 66.300 L526.300 75.500 L518.500 83 Z" fill="#f8f8f8" stroke="#8a8a8a" stroke-width=".8" stroke-linejoin="round"/>
 <path d="M518.500 83 L526.300 75.500 L525 74 L517.800 81Z" fill="#c9c9c9"/>
 <path d="M514.500 73 Q516 66 522.500 64.500" fill="none" stroke="#2c2c2c" stroke-width="2.800"/>
 <path d="M514.800 72.500 Q516.500 66.500 522.500 65" fill="none" stroke="#efefef" stroke-width="1.100"/>
 <circle cx="523" cy="64.300" r="1.700" fill="#6a6b6e" stroke="#f0f0f0" stroke-width="1"/>
 <!-- transform arrows -->
 <circle cx="544" cy="73.500" r="5.800" fill="none" stroke="#303030" stroke-width="3"/>
 <g fill="#303030"><path d="M533 62.500 L540 62.500 L538 65 L542 69 L539.500 71.500 L535.500 67.500 L533 69.500Z"/><path d="M555 62.500 L548 62.500 L550 65 L546 69 L548.500 71.500 L552.500 67.500 L555 69.500Z"/><path d="M533 84.500 L540 84.500 L538 82 L542 78 L539.500 75.500 L535.500 79.500 L533 77.500Z"/><path d="M555 84.500 L548 84.500 L550 82 L546 78 L548.500 75.500 L552.500 79.500 L555 77.500Z"/></g>
 <path d="M564.500 61v26" stroke="#58595c" stroke-width="1"/><path d="M565.500 61v26" stroke="#77787c" stroke-width="1"/>
 <!-- 3 disabled selection icons -->
 <rect x="574.500" y="67.500" width="15" height="13" fill="none" stroke="#5b5c5f" stroke-width="1.600" stroke-dasharray="2 1.500"/>
 <path d="M571.500 83 L594 62.500" stroke="#5e5f62" stroke-width="2.200"/>
 <path d="M602 83.500 L621.500 64 L621.500 83.500Z" fill="#5d5e61"/>
 <path d="M601 82 L601 63.500 L619.500 63.500 Z" fill="none" stroke="#5b5c5f" stroke-width="1.500" stroke-dasharray="2 1.500"/>
 <rect x="629" y="62" width="23" height="23" fill="#747578"/>
 <rect x="633" y="66" width="15" height="15" fill="#808184" stroke="#58595c" stroke-width="2.400" stroke-dasharray="2.200 1.600"/>
 <path d="M661.500 61v26" stroke="#58595c" stroke-width="1"/><path d="M662.500 61v26" stroke="#77787c" stroke-width="1"/>
 <!-- snap to ruler -->
 <path d="M670.500 70 L670.500 83.500 L686 83.500" fill="none" stroke="#1c9cf0" stroke-width="2.200"/>
 <path d="M670.500 69.500 L687 84" stroke="#2a2a2a" stroke-width="1.500"/>
 <path d="M684.500 63 L689.500 63 L689.500 80 L687 84.500 L684.500 80Z" fill="#f4f4f4" stroke="#2a2a2a" stroke-width="1"/>
 <!-- snap special ruler -->
 <path d="M698 81.500 Q700 71.500 709 71.500 Q713 71.500 715 74" fill="none" stroke="#1c9cf0" stroke-width="2.200"/>
 <path d="M698 82 L719 82 L719 78" fill="none" stroke="#1c9cf0" stroke-width="2"/>
 <path d="M697.500 81.500 Q699.500 72.500 708 72.200" fill="none" stroke="#2a2a2a" stroke-width="1.300"/>
 <path d="M697.500 81.500 L716 81.500" stroke="#2a2a2a" stroke-width="1.300"/>
 <path d="M713.500 62.500 L718.500 62.500 L718.500 77 L716 81.500 L713.500 77Z" fill="#f4f4f4" stroke="#2a2a2a" stroke-width="1"/>
 <!-- snap grid -->
 <path d="M727.500 70.500h21M727.500 79h21M733 63.500v21.500M741.500 75v10" stroke="#1c9cf0" stroke-width="2"/>
 <path d="M736.500 62.500 L741.500 62.500 L741.500 76 L739 80 L736.500 76Z" fill="#f4f4f4" stroke="#2a2a2a" stroke-width="1"/>
 <path d="M739 63v12" stroke="#555" stroke-width=".8"/>
 <path d="M757.500 61v26" stroke="#58595c" stroke-width="1"/><path d="M758.500 61v26" stroke="#77787c" stroke-width="1"/>
 <!-- view dropdown -->
 <rect x="767" y="73.500" width="19.500" height="9.500" fill="url(#gRect)" stroke="#f0f0f0" stroke-width="1.300"/>
 <path d="M766 68.500 V64.500 H770.500M787.500 68.500 V64.500 H783M773 68.500 L776.700 65 L780.500 68.500" fill="none" stroke="#2a2a2a" stroke-width="1.300"/>
 <path d="M793 71 L804.500 71 L798.700 77.500Z" fill="#2a2a2a"/>
 <path d="M814.500 61v26" stroke="#58595c" stroke-width="1"/><path d="M815.500 61v26" stroke="#77787c" stroke-width="1"/>
 <!-- help -->
 <circle cx="833.500" cy="73" r="12" fill="#272727"/>
</svg>
<div class="t" style="left:827px;top:62px;font-size:21px;font-weight:bold;color:#fff;">?</div>

<!-- doc tab -->
<div class="a" style="left:278px;top:90px;width:119px;height:22px;background:linear-gradient(#7c7c7e,#69696b);border:1px solid #5a5a5c;border-bottom:none;box-sizing:border-box;"></div>
<div class="t" style="left:281.500px;top:96px;font-size:10.200px;color:#cfcfcf;">新畫布</div>
<svg style="left:381px;top:96px" width="9" height="9"><path d="M1 1 L8 8 M8 1 L1 8" stroke="#3c3c3c" stroke-width="2.200"/></svg>
<!-- doc tab dropdown btn -->
<div class="a sb" style="left:1124px;top:90px;width:12px;height:21px;"></div>
<svg style="left:1127px;top:99px" width="7" height="4"><path d="M0 0h7L3.500 4Z" fill="#2e2e2e"/></svg>
<!-- vertical scrollbar -->
<div class="a" style="left:1124px;top:114px;width:12px;height:412px;background:#5a5b5d;border-left:1px solid #4a4a4c;border-right:1px solid #6e6f71;box-sizing:border-box;"></div>
<div class="a sb" style="left:1124px;top:115px;width:12px;height:12px;"></div>
<svg style="left:1127px;top:119px" width="7" height="4"><path d="M0 4h7L3.500 0Z" fill="#2e2e2e"/></svg>
<div class="a sb" style="left:1124px;top:514px;width:12px;height:12px;"></div>
<svg style="left:1127px;top:518px" width="7" height="4"><path d="M0 0h7L3.500 4Z" fill="#2e2e2e"/></svg>
<div class="a sb" style="left:1124px;top:243px;width:12px;height:154px;"></div>
<div class="a" style="left:1127px;top:317px;width:6px;height:1px;background:#333;box-shadow:0 2px 0 #333,0 4px 0 #333;"></div>


<!-- ===== STATUS BAR (y 527-541) ===== -->
<div class="a" style="left:278px;top:526px;width:860px;height:16px;background:#636466;"></div>
<svg style="left:0;top:0" width="1140" height="545">
 <defs>
  <radialGradient id="gMag" cx=".4" cy=".4" r=".7"><stop offset="0" stop-color="#fff"/><stop offset="1" stop-color="#c4c4c4"/></radialGradient>
 </defs>
 <!-- zoom slider -->
 <rect x="279" y="527" width="118" height="14" fill="#252527"/>
 <path d="M279 527 L387 527 L299 541 L279 541Z" fill="#5f6063"/>
 <rect x="337" y="527" width="4.500" height="14" fill="#696a6d"/>
 <rect x="397" y="527" width="54" height="14" fill="#696a6d"/>
 <!-- zoom out / in -->
 <path d="M412 537 L416 541" stroke="#2a2a2a" stroke-width="2.400"/>
 <circle cx="408.500" cy="533.500" r="5.300" fill="url(#gMag)" stroke="#3a3a3a" stroke-width="1"/>
 <path d="M405.500 533.500h6" stroke="#222" stroke-width="1.800"/>
 <path d="M436.500 537 L440.500 541" stroke="#2a2a2a" stroke-width="2.400"/>
 <circle cx="433" cy="533.500" r="5.300" fill="url(#gMag)" stroke="#3a3a3a" stroke-width="1"/>
 <path d="M430 533.500h6M433 530.500v6" stroke="#222" stroke-width="1.800"/>
 <!-- fit square -->
 <rect x="451" y="527" width="14" height="14" fill="#1e1e1e"/>
 <rect x="453.500" y="529.500" width="9" height="9" fill="#1a1a1a" stroke="#4c4c4e" stroke-width="1.300"/>
 <!-- rotation slider -->
 <rect x="471" y="527" width="118" height="14" fill="#262628"/>
 <path d="M487 527 C497 527 500 541 510 541 C522 541 528 535 534 533 L534 527Z" fill="#66676a"/>
 <path d="M533 527 L533 533 C541 530 546 527 551 527 C566 527 574 538 589 541 L589 527Z" fill="#66676a"/>
 <rect x="528" y="527" width="5" height="14" fill="#66676a"/>
 <!-- rotate icons -->
 <g fill="none" stroke="#222" stroke-width="2.800"><path d="M598.500 535.500 Q598.500 529 603.500 529 Q608.500 529 608.500 535 L608.500 540"/><path d="M629.500 535.500 Q629.500 529 624.500 529 Q619.500 529 619.500 535 L619.500 540"/></g>
 <path d="M594 533.500 L603 533.500 L598.500 540.500Z" fill="#222"/><path d="M634 533.500 L625 533.500 L629.500 540.500Z" fill="#222"/>
 <circle cx="650" cy="534" r="5" fill="none" stroke="#55565a" stroke-width="2.600" stroke-dasharray="2.300 1.600"/>
</svg>
<div class="t" style="left:280px;top:529.500px;font-size:11px;color:#f2f2f2;letter-spacing:-.2px;">54.6</div>
<div class="t" style="left:474px;top:529.500px;font-size:11px;color:#f2f2f2;letter-spacing:-.2px;">0.0</div>
<!-- horizontal scrollbar -->
<div class="a" style="left:662px;top:527px;width:462px;height:14px;background:#5a5b5d;border-top:1px solid #4a4a4c;box-sizing:border-box;"></div>
<div class="a sb" style="left:663px;top:528px;width:12px;height:12px;background:linear-gradient(#77787a,#68696b);"></div>
<svg style="left:666px;top:530px" width="5" height="8"><path d="M4.500 0v8L0 4Z" fill="#2e2e2e"/></svg>
<div class="a sb" style="left:1111px;top:528px;width:12px;height:12px;background:linear-gradient(#77787a,#68696b);"></div>
<svg style="left:1115px;top:530px" width="5" height="8"><path d="M0 0v8L4.500 4Z" fill="#2e2e2e"/></svg>
<div class="a sb" style="left:800px;top:528px;width:184px;height:12px;background:linear-gradient(#77787a,#68696b);"></div>
<div class="a" style="left:889px;top:531px;width:1px;height:6px;background:#333;box-shadow:2px 0 0 #333,4px 0 0 #333;"></div>
<div class="a" style="left:1124px;top:527px;width:12px;height:14px;background:#68696b;border:1px solid #77787a;box-sizing:border-box;"></div>

<!-- ===== TIMELINE ===== -->
<div class="a" style="left:278px;top:542px;width:860px;height:2px;background:#505153;"></div>
<div class="a" style="left:1113px;top:544px;width:24px;height:181px;background:linear-gradient(#67686b 0,#545557 25%,#444 60%,#3a3a3a 100%);border-left:1px solid #5a5b5d;box-sizing:border-box;"></div>
<div class="a" style="left:1137px;top:58px;width:1px;height:670px;background:#2f2f2f;"></div>
<svg style="left:1117px;top:714px" width="16" height="8"><path d="M0 0 L4 0 L8 3.200 L12 0 L16 0 L8 7Z" fill="#858585"/></svg>
<div class="a dk" style="left:279px;top:544px;width:834px;height:19px;"></div>
<div class="pm" style="left:279px;top:545px;width:21px;"><svg width="22" height="18" style="left:-1px;top:0"><use href="#pmenu"/></svg></div>
<div class="tab" style="left:300px;top:545px;width:66px;height:18px;"></div>
<div class="t" style="left:333px;top:552px;font-size:9.500px;color:#d6d6d6;">時間軸</div>
<div class="a" style="left:278px;top:593px;width:835px;height:1px;background:#2e2e30;"></div>
<div class="a" style="left:278px;top:621px;width:835px;height:1px;background:#2e2e30;"></div>
<div class="a" style="left:446px;top:594px;width:1px;height:131px;background:#2e2e30;"></div>
<div class="a" style="left:278px;top:594px;width:1px;height:131px;background:#2e2e30;"></div>
<div class="t" style="left:354px;top:574px;font-size:11px;color:#c9c9c9;">/</div>
<div class="t" style="left:438px;top:574px;font-size:11px;color:#c9c9c9;">/</div>
<!-- timeline name dropdown -->
<div class="a" style="left:279px;top:594px;width:163px;height:27px;background:#7b7c7f;border:1px solid #86878a;border-right-color:#5c5d60;border-bottom-color:#5c5d60;border-radius:2px;box-sizing:border-box;"></div>
<div class="t" style="left:330px;top:600px;font-size:12px;color:#b2b3b6;letter-spacing:-.3px;">時間軸1</div>
<svg style="left:426px;top:605px" width="11" height="6"><path d="M0 0h11L5.500 6Z" fill="#4a4b4e"/></svg>
<div class="a" style="left:443px;top:602px;width:1px;height:1px;background:#222;box-shadow:0 4px 0 #222,0 8px 0 #222,0 12px 0 #222;"></div>
<!-- timeline scrollbars -->
<div class="a" style="left:1099px;top:622px;width:13px;height:88px;background:#5c5d60;border-left:1px solid #4f5053;box-sizing:border-box;"></div>
<div class="a" style="left:447px;top:711px;width:651px;height:13px;background:#58595c;border-top:1px solid #4b4c4f;box-sizing:border-box;"></div>
<div class="a" style="left:1098px;top:710px;width:14px;height:15px;background:#6a6b6e;border:1px solid #77787b;box-sizing:border-box;"></div>



<!-- hover button -->
<div class="a" style="left:543px;top:570px;width:22px;height:22px;background:linear-gradient(#77787b,#6c6d70);border:1px solid #8c8d90;border-radius:3px;box-sizing:border-box;box-shadow:0 0 0 1px #4c4d50;"></div>
<svg style="left:0;top:0" width="1140" height="640">
 <defs>
  <linearGradient id="gFilm" x1="0" y1="0" x2="0" y2="1"><stop offset="0" stop-color="#ffffff"/><stop offset="1" stop-color="#b4b4b4"/></linearGradient>
  <symbol id="film" viewBox="0 0 18 13"><rect x=".5" y=".5" width="17" height="12" fill="url(#gFilm)" stroke="#4a4a4a" stroke-width=".9"/><path d="M3 1v11M5.200 1v11M7.400 1v11M9.600 1v11M11.800 1v11" stroke="#6a6a6a" stroke-width=".9"/><rect x="13.600" y="3" width="1.800" height="1.800" fill="#2a35b0"/><rect x="13.600" y="8" width="1.800" height="1.800" fill="#2a35b0"/></symbol>
 </defs>
 <!-- tab icon -->
 <use href="#film" x="307" y="550" width="18" height="13"/>
 <!-- toolbar film icons -->
 <use href="#film" x="521" y="575" width="18" height="13"/>
 <use href="#film" x="546" y="576" width="16.600" height="12"/>
 <path d="M546.500 571.500v6M544 573l5 3M544 576l5-3" stroke="#2c2c2c" stroke-width=".9"/>
 <!-- zoom out / in disabled -->
 <path d="M594 584.500 L598.500 589.500" stroke="#808184" stroke-width="2.800"/>
 <circle cx="589.500" cy="580" r="6.800" fill="#8c8d90"/><path d="M585.700 580h7.600" stroke="#646568" stroke-width="2.400"/>
 <path d="M617.500 584.500 L622 589.500" stroke="#808184" stroke-width="2.800"/>
 <circle cx="613" cy="580" r="6.800" fill="#8c8d90"/><path d="M609.200 580h7.600M613 576.200v7.600" stroke="#646568" stroke-width="2.400"/>
 <!-- transport -->
 <g fill="#505153">
  <rect x="644" y="574" width="2.600" height="14"/><path d="M656 574 L656 588 L647.500 581Z"/>
  <path d="M666 581 L675 573.500 L675 578 L683.500 578 L683.500 584 L675 584 L675 588.500Z"/>
  <path d="M692 573.500 L705 581 L692 588.500Z"/>
  <path d="M730.500 581 L721.500 573.500 L721.500 578 L713.500 578 L713.500 584 L721.500 584 L721.500 588.500Z"/>
  <rect x="749" y="574" width="2.600" height="14"/><path d="M740 574 L740 588 L748.500 581Z"/>
 </g>
 <!-- loop -->
 <g fill="none" stroke="#57585b" stroke-width="2.600"><path d="M777 581 Q777 577 781 577 L786 577"/><path d="M788.500 581.500 Q788.500 585.500 784.500 585.500 L779.500 585.500"/></g>
 <path d="M785 573 L790.500 577 L785 581Z" fill="#57585b"/><path d="M780.500 581.500 L775 585.500 L780.500 589.500Z" fill="#57585b"/>
 <!-- cel icons -->
 <rect x="808.500" y="577.500" width="15" height="12" fill="#a9a9ab" stroke="#77787a" stroke-width=".8"/>
 <rect x="812.500" y="572.500" width="15" height="14.500" fill="#f4f4f4" stroke="#3a3a3a" stroke-width="1"/>
 <rect x="812.500" y="572.500" width="15" height="3" fill="#2a2a2a"/><rect x="815" y="573.300" width="1.600" height="1.400" fill="#fff"/><rect x="823.500" y="573.300" width="1.600" height="1.400" fill="#fff"/>
 <rect x="814.500" y="577.500" width="11" height="7.500" fill="#fff" stroke="#e25aa8" stroke-width="1.100"/>
 <g fill="#77787b" stroke="#5a5b5e" stroke-width=".9">
  <rect x="835.500" y="576.500" width="15" height="11.500"/><rect x="858.500" y="576.500" width="15" height="11.500"/><rect x="882.500" y="576.500" width="15" height="11.500"/>
 </g>
 <g fill="#4c4d50"><rect x="835.500" y="576" width="15" height="2.600"/><rect x="858.500" y="576" width="15" height="2.600"/><rect x="882.500" y="576" width="15" height="2.600"/></g>
 <path d="M836 572.500v4M834.300 573.500l3.400 2M834.300 575.500l3.400-2" stroke="#58595c" stroke-width=".8"/>
 <g fill="none" stroke="#58595c" stroke-width="1.600"><rect x="866" y="585" width="5" height="3.600" rx="1.600"/><rect x="870" y="585" width="5" height="3.600" rx="1.600"/><rect x="889" y="585" width="4.200" height="3.600" rx="1.600"/><rect x="895" y="585" width="4.200" height="3.600" rx="1.600"/></g>
 <!-- onion skin -->
 <rect x="921.500" y="576.500" width="14" height="14" fill="#8e8f92" stroke="#4a4b4e" stroke-width=".9"/>
 <rect x="917.500" y="572.500" width="15.500" height="15.500" fill="#fafafa" stroke="#3e3e40" stroke-width="1"/>
 <rect x="921" y="576" width="10" height="10" fill="#a4a4a6"/>
</svg>
<!-- tooltip -->
<div class="a" style="left:555px;top:608px;width:71px;height:19px;background:linear-gradient(#ffffff,#e6e7f1);border:1px solid #7a7a7c;border-radius:3px;box-sizing:border-box;box-shadow:1px 2px 3px rgba(0,0,0,.45);"></div>
<div class="t" style="left:560px;top:612px;font-size:12px;color:#555557;">新建時間軸</div>
<!-- cursor -->
<svg style="left:553px;top:588px" width="14" height="22"><path d="M1 1 L1 17 L4.800 13.600 L7.600 20 L10.200 18.900 L7.400 12.600 L12.400 12.400Z" fill="#fff" stroke="#111" stroke-width="1" stroke-linejoin="round"/></svg>


<!-- ===== RIGHT gutter + dock ===== -->
<div class="a" style="left:1138px;top:58px;width:16px;height:670px;background:linear-gradient(90deg,#3e3e3f 0,#4c4c4d 40%,#696a6d 100%);"></div><div class="a" style="left:1154px;top:58px;width:1px;height:670px;background:#333;"></div>
<div class="a strip" style="left:1138px;top:58px;width:16px;height:24px;"></div>
<div class="a" style="left:1155px;top:82px;width:1px;height:646px;background:#85868a;"></div><div class="a" style="left:1155px;top:58px;width:1px;height:24px;background:#555;"></div>
<div class="a strip" style="left:1156px;top:58px;width:210px;height:24px;"></div>
<div class="a" style="left:1156px;top:82px;width:210px;height:1px;background:#85868a;"></div>
<svg style="left:1140px;top:63px" width="13" height="16"><use href="#chevL"/></svg>
<svg style="left:1157px;top:63px" width="13" height="16"><use href="#chevR"/></svg>

<!-- NAVIGATOR -->
<div class="a dk" style="left:1157px;top:84px;width:207px;height:19px;"></div>
<div class="pm" style="left:1157px;top:85px;width:20px;"><svg width="22" height="18" style="left:-1px;top:0"><use href="#pmenu"/></svg></div>
<div class="tab" style="left:1178px;top:85px;width:66px;height:18px;"></div>
<svg style="left:1184px;top:89px" width="22" height="20"><rect x="7" y="7" width="13" height="10.500" fill="#696a6e" stroke="#e8e8e8" stroke-width="1.200"/><rect x="4" y="4" width="13" height="10.500" fill="#696a6e" stroke="#f4f4f4" stroke-width="1.200"/><rect x="1.200" y="1.500" width="12.500" height="10" fill="#fff" stroke="#e01010" stroke-width="1.600"/></svg>
<div class="t" style="left:1211px;top:92px;font-size:9.500px;color:#d6d6d6;">導航器</div>
<div class="a" style="left:1157px;top:109px;width:209px;height:68px;background:#303030;"></div>
<div class="a" style="left:1218px;top:120px;width:84px;height:47px;background:#fff;"></div>
<div class="a" style="left:1209px;top:118px;width:103px;height:51px;border:1px solid #f00000;box-sizing:border-box;"></div>
<svg style="left:1156px;top:178px" width="210" height="52">
 <defs><radialGradient id="gMag2" cx=".4" cy=".4" r=".7"><stop offset="0" stop-color="#fff"/><stop offset="1" stop-color="#d0d0d0"/></radialGradient>
 <linearGradient id="gWG" x1="0" y1="0" x2="1" y2="1"><stop offset="0" stop-color="#fff"/><stop offset="1" stop-color="#cfd8dc"/></linearGradient></defs>
 <!-- sliders -->
 <rect x="5.500" y="7.500" width="74" height="15" fill="#252527" stroke="#77787a" stroke-width="1"/>
 <path d="M6 8 L72 8 L22 22 L6 22Z" fill="#5f6063"/>
 <rect x="5.500" y="31.500" width="74" height="15" fill="#252527" stroke="#77787a" stroke-width="1"/>
 <path d="M14 32 C22 32 24 46 32 46 C40 46 42 40 45 38 L45 32Z" fill="#5f6063"/>
 <path d="M45 32 L45 38 C50 33 54 32 58 32 C68 32 72 42 79 46 L79 32Z" fill="#5f6063"/>
 <rect x="41.500" y="3" width="4" height="24" fill="#68696c" stroke="#555659" stroke-width=".6"/>
 <rect x="41.500" y="27" width="4" height="23" fill="#68696c" stroke="#555659" stroke-width=".6"/>
 <!-- zoom out/in -->
 <path d="M102 19 L107.500 25.500" stroke="#3c3c3e" stroke-width="3"/>
 <circle cx="96.700" cy="13" r="8.300" fill="#e9e9e9" stroke="#2e2e30" stroke-width="1"/><circle cx="96.700" cy="13" r="6.700" fill="none" stroke="#fff" stroke-width="2.200"/><circle cx="96.700" cy="13" r="5.400" fill="none" stroke="#2a2a2a" stroke-width=".9"/>
 <path d="M93 13h7.400" stroke="#1c1c1c" stroke-width="2.300"/>
 <path d="M126 19 L131.500 25.500" stroke="#3c3c3e" stroke-width="3"/>
 <circle cx="120.600" cy="13" r="8.300" fill="#e9e9e9" stroke="#2e2e30" stroke-width="1"/><circle cx="120.600" cy="13" r="6.700" fill="none" stroke="#fff" stroke-width="2.200"/><circle cx="120.600" cy="13" r="5.400" fill="none" stroke="#2a2a2a" stroke-width=".9"/>
 <path d="M116.900 13h7.400M120.600 9.300v7.400" stroke="#1c1c1c" stroke-width="2.300"/>
 <!-- fit -->
 <rect x="133" y="3" width="24" height="24" fill="#272727"/><rect x="137.500" y="7.500" width="15" height="15" fill="#2a2a2a" stroke="#5e5f62" stroke-width="1.600"/>
 <path d="M159.500 3v47" stroke="#555659" stroke-width="1"/>
 <!-- fit to nav / actual -->
 <rect x="161.500" y="4.500" width="17" height="13" fill="url(#gWG)" stroke="#2a2a2a" stroke-width="1"/><rect x="161" y="4" width="18" height="2.500" fill="#2a2a2a"/>
 <rect x="167.500" y="12.500" width="17" height="13" fill="url(#gWG)" stroke="#2a2a2a" stroke-width="1"/>
 <path d="M171 9 L183 21" stroke="#1e1e1e" stroke-width="2.200"/><path d="M169 7 L175 8 L170 13Z M185 23 L179 22 L184 17Z" fill="#1e1e1e"/>
 <rect x="186.500" y="4.500" width="24" height="21" fill="url(#gWG)" stroke="#2a2a2a" stroke-width="1"/><rect x="186" y="4" width="25" height="3" fill="#2a2a2a"/>
 <path d="M191 10 L207 23" stroke="#1e1e1e" stroke-width="2.400"/><path d="M188.500 8 L195.500 9 L190 14.500Z M209.500 25 L202.500 24 L208 18.500Z" fill="#1e1e1e"/>
 <!-- rotate L / R -->
 <g fill="none" stroke="#262626" stroke-width="3.200"><path d="M90.500 42 Q90.500 31.500 98.500 31.500 Q106.500 31.500 106.500 42 L106.500 46"/><path d="M128.500 42 Q128.500 31.500 120.500 31.500 Q112.500 31.500 112.500 42 L112.500 46"/></g>
 <path d="M84.500 39.500 L96.500 39.500 L90.500 48.500Z" fill="#262626"/><path d="M134.500 39.500 L122.500 39.500 L128.500 48.500Z" fill="#262626"/>
 <!-- reset disabled -->
 <g fill="#5a5b5e"><path d="M146 29.500 L149.500 35.500 L145 36.500Z" transform="rotate(0 146 39.500)"/><path d="M146 29.500 L149.500 35.500 L145 36.500Z" transform="rotate(45 146 39.500)"/><path d="M146 29.500 L149.500 35.500 L145 36.500Z" transform="rotate(90 146 39.500)"/><path d="M146 29.500 L149.500 35.500 L145 36.500Z" transform="rotate(135 146 39.500)"/><path d="M146 29.500 L149.500 35.500 L145 36.500Z" transform="rotate(180 146 39.500)"/><path d="M146 29.500 L149.500 35.500 L145 36.500Z" transform="rotate(225 146 39.500)"/><path d="M146 29.500 L149.500 35.500 L145 36.500Z" transform="rotate(270 146 39.500)"/><path d="M146 29.500 L149.500 35.500 L145 36.500Z" transform="rotate(315 146 39.500)"/></g>
 <!-- flip H / V -->
 <path d="M172.500 33v17" stroke="#262626" stroke-width="1.400" stroke-dasharray="1.500 1.500"/>
 <path d="M162 39 L162 49.500 L170 44.500Z" fill="#fafafa"/><path d="M183 39 L183 49.500 L175 44.500Z" fill="#262626"/>
 <path d="M166 37 Q167 30.500 173 30.500 Q178 30.500 179.500 35" fill="none" stroke="#262626" stroke-width="2.600"/><path d="M176 34 L183.500 33 L181 39.500Z" fill="#262626"/>
 <path d="M193 38.500h17" stroke="#262626" stroke-width="1.400" stroke-dasharray="1.500 1.500"/>
 <path d="M197 28.500 L209 28.500 L203 36Z" fill="#262626"/><path d="M197 50 L209 50 L203 41.500Z" fill="#fafafa"/>
 <path d="M196 44 Q189.500 43 189.500 37.500 Q189.500 33 194 31.500" fill="none" stroke="#262626" stroke-width="2.600"/><path d="M192.500 28 L198.500 31.500 L193 35.500Z" fill="#262626"/>
</svg>
<div class="t" style="left:1164px;top:188.500px;font-size:11px;letter-spacing:-.2px;">54.6</div>
<div class="t" style="left:1167px;top:212.500px;font-size:11px;letter-spacing:-.2px;">0.0</div>
<div class="a" style="left:1156px;top:229px;width:210px;height:1px;background:#4a4b4e;"></div>

<!-- COLOUR WHEEL -->
<div class="a dk" style="left:1157px;top:232px;width:207px;height:19px;"></div>
<div class="pm" style="left:1157px;top:233px;width:20px;"><svg width="22" height="18" style="left:-1px;top:0"><use href="#pmenu"/></svg></div>
<div class="tabi" style="left:1178px;top:233px;width:76px;height:18px;"></div>
<svg style="left:1184px;top:236px" width="24" height="14"><path d="M2 13 Q12 12 20 1" fill="none" stroke="#707174" stroke-width="1.600"/><path d="M1 13.500 Q5 9.500 9 13.500Z" fill="#707174"/></svg>
<div class="t" style="left:1211px;top:240px;font-size:9.500px;color:#7b7c7f;">圖層屬性</div>
<div class="tab" style="left:1255px;top:233px;width:57px;height:18px;"></div>
<div class="a" style="left:1262px;top:236px;width:19px;height:19px;border-radius:50%;background:#f4f4f4;"></div>
<div class="a" style="left:1262px;top:235px;width:19px;height:19px;border-radius:50%;background:conic-gradient(from 300deg,#f00,#ff0,#0f0,#0ff,#00f,#f0f,#f00);"></div>
<div class="a" style="left:1268px;top:241px;width:7px;height:7px;border-radius:50%;background:#77787c;"></div>
<div class="t" style="left:1288px;top:240px;font-size:9.500px;color:#e8e8e8;">色環</div>
<div class="a" style="left:1157px;top:258px;width:1px;height:127px;background:#3f4043;"></div>
<div class="a" style="left:1211px;top:263px;width:102px;height:102px;border-radius:50%;background:conic-gradient(from 300deg,#f00,#ff0,#0f0,#0ff,#00f,#f0f,#f00);-webkit-mask:radial-gradient(circle,transparent 37.300px,#000 38.300px,#000 50.300px,transparent 51px);mask:radial-gradient(circle,transparent 37.300px,#000 38.300px,#000 50.300px,transparent 51px);"></div>
<svg style="left:1206px;top:258px" width="112" height="112">
 <defs>
  <linearGradient id="tW" gradientUnits="userSpaceOnUse" x1="36" y1="32" x2="62" y2="69"><stop offset="0" stop-color="#fff" stop-opacity="1"/><stop offset="1" stop-color="#fff" stop-opacity="0"/></linearGradient>
  <linearGradient id="tB" gradientUnits="userSpaceOnUse" x1="35" y1="81" x2="62" y2="44"><stop offset="0" stop-color="#000" stop-opacity="1"/><stop offset="1" stop-color="#000" stop-opacity="0"/></linearGradient>
 </defs>
 <circle cx="56" cy="55.500" r="50.800" fill="none" stroke="#3a3a3c" stroke-width=".8"/><circle cx="56" cy="55.500" r="37.600" fill="none" stroke="#3a3a3c" stroke-width=".8"/>
 <path d="M36 32 L88.500 56.300 L35 81Z" fill="#ee1230"/>
 <path d="M36 32 L88.500 56.300 L35 81Z" fill="url(#tW)"/>
 <path d="M36 32 L88.500 56.300 L35 81Z" fill="url(#tB)" stroke="#2e2e30" stroke-width=".8"/>
 <rect x="31" y="78" width="6.500" height="6.500" fill="none" stroke="#111" stroke-width="2.600"/><rect x="31" y="78" width="6.500" height="6.500" fill="#4e4e50" stroke="#fff" stroke-width="1.200"/>
 <g transform="rotate(24 15 37)"><rect x="8" y="34.500" width="15" height="3.400" fill="none" stroke="#111" stroke-width="1"/><rect x="6" y="34" width="3" height="4.400" fill="#696a6e" stroke="#111" stroke-width=".9"/></g>
</svg>
<!-- fg / bg -->
<div class="a" style="left:1171px;top:348px;width:24px;height:24px;background:#fff;border:1px solid #3a3a3a;box-sizing:border-box;"></div>
<div class="a" style="left:1159px;top:335px;width:24px;height:24px;background:#000;border:2px solid #8cc3e0;box-shadow:inset 0 0 0 1px #fff;box-sizing:border-box;"></div>
<div class="a" style="left:1159px;top:373px;width:36px;height:11px;border:1px solid #4a4a4a;box-sizing:border-box;background-color:#fff;background-image:linear-gradient(45deg,#a9a9a9 25%,transparent 25%,transparent 75%,#a9a9a9 75%),linear-gradient(45deg,#a9a9a9 25%,transparent 25%,transparent 75%,#a9a9a9 75%);background-size:8px 8px;background-position:0 0,4px 4px;"></div>
<!-- HLS -->
<div class="a hls" style="left:1218px;top:372px;">H</div>
<div class="t" style="left:1233px;top:370px;font-size:12px;letter-spacing:-.6px;">355</div>
<div class="a hls" style="left:1257px;top:372px;">L</div>
<div class="t" style="left:1280px;top:370px;font-size:12px;">0</div>
<div class="a hls" style="left:1296px;top:372px;">S</div>
<div class="t" style="left:1319px;top:370px;font-size:12px;">0</div>
<div class="a" style="left:1339px;top:362px;width:21px;height:21px;border-radius:50%;background:conic-gradient(from 300deg,#f00,#ff0,#0f0,#0ff,#00f,#f0f,#f00);"></div>
<div class="a" style="left:1343px;top:366px;width:13px;height:13px;border-radius:50%;background:#5a5b5e;"></div>
<div class="a" style="left:1345px;top:368px;width:9px;height:9px;background:linear-gradient(135deg,#ff5a3c,#b01818 50%,#1a0505);border:1px solid #222;box-sizing:border-box;"></div>
<div class="a" style="left:1156px;top:387px;width:210px;height:1px;background:#4a4b4e;"></div>

<!-- LAYER PANEL -->
<div class="a dk" style="left:1157px;top:390px;width:207px;height:19px;"></div>
<div class="pm" style="left:1157px;top:391px;width:20px;"><svg width="22" height="18" style="left:-1px;top:0"><use href="#pmenu"/></svg></div>
<div class="tab" style="left:1178px;top:391px;width:57px;height:18px;"></div>
<svg style="left:1185px;top:393px" width="19" height="18"><g stroke="#2e2e2e" stroke-width=".7"><path d="M1 13.500 L9.500 10 L18 13.500 L9.500 17Z" fill="#f2f2f2"/><path d="M1 10 L9.500 6.500 L18 10 L9.500 13.500Z" fill="#cfcfcf"/><path d="M1 6.500 L9.500 3 L18 6.500 L9.500 10Z" fill="#f2f2f2"/><path d="M1 3.500 L9.500 0.500 L18 3.500 L9.500 7Z" fill="#dedede"/></g></svg>
<div class="t" style="left:1211px;top:398px;font-size:9.500px;color:#d6d6d6;">圖層</div>
<div class="tabi" style="left:1236px;top:391px;width:33px;height:18px;"></div>
<svg style="left:1241px;top:393px" width="22" height="16"><rect x="2" y="0" width="12" height="14" fill="#77787b"/><g fill="none" stroke="#3c3c3e" stroke-width="2"><path d="M4 9 Q4 4 9 4 Q13 4 14 8"/><path d="M18 8 Q18 13 13 13 Q9 13 8 10"/></g><path d="M11 8 L17 7 L15 12Z M11 10 L5 11 L7 6Z" fill="#3c3c3e"/></svg>
<div class="tabi" style="left:1270px;top:391px;width:33px;height:18px;"></div>
<svg style="left:1277px;top:395px" width="20" height="12"><path d="M1 4 L16 0 L17 2.500 L2 6.500Z" fill="#6c6d70" stroke="#707174" stroke-width=".5" stroke-dasharray="2 1.500"/><rect x="2" y="6.500" width="15" height="5" fill="#646568"/><path d="M4 3.500l2 2.500M8 2.500l2 2.500M12 1.500l2 2.500" stroke="#55565a" stroke-width="1.200"/></svg>
<!-- blend dropdown -->
<div class="a" style="left:1158px;top:416px;width:99px;height:22px;background:linear-gradient(#6f7073,#5d5e61);border:1px solid #808184;border-bottom-color:#4a4b4e;border-right-color:#4a4b4e;border-radius:3px;box-sizing:border-box;"></div>
<div class="t" style="left:1188px;top:419px;font-size:12px;">普通</div>
<svg style="left:1244px;top:424px" width="10" height="6"><path d="M0 0h10L5 6Z" fill="#2a2a2c"/></svg>
<!-- opacity slider -->
<div class="a" style="left:1265px;top:421px;width:49px;height:11px;box-sizing:border-box;border:1px solid #55565a;background-color:#f6f6f6;background-image:linear-gradient(90deg,rgba(246,246,246,.7),rgba(246,246,246,0)),linear-gradient(45deg,#cfcfcf 25%,transparent 25%,transparent 75%,#cfcfcf 75%),linear-gradient(45deg,#cfcfcf 25%,transparent 25%,transparent 75%,#cfcfcf 75%);background-size:auto,10px 10px,10px 10px;background-position:0 0,0 0,5px 5px;"></div>
<div class="a" style="left:1314px;top:415px;width:4px;height:24px;background:#5c5d60;border:1px solid #4c4d50;box-sizing:border-box;"></div>
<div class="t" style="left:1325px;top:420px;font-size:12px;letter-spacing:-.6px;">100</div>
<svg style="left:1347px;top:420px" width="10" height="15"><path d="M0 5.500 L10 5.500 L5 0Z M0 9.500 L10 9.500 L5 15Z" fill="#202022"/></svg>
<svg style="left:1156px;top:438px" width="210" height="28">
 <defs>
  <linearGradient id="gCyl" x1="0" y1="0" x2="1" y2="0"><stop offset="0" stop-color="#3c3c3e"/><stop offset=".5" stop-color="#a6a6a8"/><stop offset="1" stop-color="#4a4a4c"/></linearGradient>
  <linearGradient id="gLh" x1="0" y1="0" x2="0" y2="1"><stop offset="0" stop-color="#222"/><stop offset=".35" stop-color="#4a4a4a"/><stop offset="1" stop-color="#f4f4f4"/></linearGradient>
  <linearGradient id="gLock" x1="0" y1="0" x2="1" y2="0"><stop offset="0" stop-color="#3e3e40"/><stop offset=".5" stop-color="#8a8a8c"/><stop offset="1" stop-color="#48484a"/></linearGradient>
 </defs>
 <!-- clip cylinder -->
 <path d="M32 14 L32 19 Q32 24 43.500 24 Q55 24 55 19 L55 14Z" fill="url(#gCyl)" stroke="#2a2a2c" stroke-width=".8"/>
 <ellipse cx="43.500" cy="14" rx="11.500" ry="4.200" fill="#232325" stroke="#8a8a8c" stroke-width=".8"/>
 <path d="M32 14 L32 8.500 M55 14 L55 8.500" stroke="#2e2e30" stroke-width="1" stroke-dasharray="1.600 1.400"/>
 <ellipse cx="43.500" cy="8.500" rx="11.500" ry="4.400" fill="none" stroke="#2e2e30" stroke-width="1.100" stroke-dasharray="2 1.500"/>
 <!-- lighthouse -->
 <path d="M65 5.500 L58 2.500 L58 12.500 L65 9.500Z M70.500 5.500 L77 2.500 L77 12.500 L70.500 9.500Z" fill="#9a9b9e" opacity=".8"/>
 <path d="M65 5.500 L70.500 5.500 L72 25.500 L63.500 25.500Z" fill="url(#gLh)" stroke="#2e2e30" stroke-width=".6"/>
 <path d="M64.500 5.500 Q67.800 0.500 71 5.500Z" fill="#1e1e20"/><rect x="65" y="5.500" width="5.500" height="4" fill="#f4f4f4" stroke="#222" stroke-width=".6"/>
 <!-- lock -->
 <path d="M86.500 12 L86.500 9 Q86.500 4.500 91.500 4.500 Q96.500 4.500 96.500 9 L96.500 12" fill="none" stroke="#3c3c3e" stroke-width="2.600"/>
 <rect x="83.500" y="11.500" width="16" height="13" rx="1" fill="url(#gLock)" stroke="#2a2a2c" stroke-width="1"/>
 <path d="M91.500 15 a1.600 1.600 0 1 1 0.010 0 M90.700 17 L92.300 17 L92.800 21.500 L90.200 21.500Z" fill="#1a1a1c"/>
 <!-- lock transparent -->
 <path d="M108 9.500 L108 7.500 Q108 4 111.500 4 Q115 4 115 7.500 L115 9.500" fill="none" stroke="#f2f2f2" stroke-width="1.800"/>
 <rect x="105.500" y="9" width="12" height="9" rx="1" fill="#f2f2f2" stroke="#3a3a3c" stroke-width=".8"/><rect x="110.700" y="11.500" width="1.700" height="4" fill="#1a1a1c"/>
 <rect x="114.500" y="14.500" width="11" height="11" fill="#fff" stroke="#4a4a4c" stroke-width=".8"/><rect x="114.500" y="14.500" width="5.500" height="5.500" fill="#8a8a8c"/><rect x="120" y="20" width="5.500" height="5.500" fill="#8a8a8c"/>
 <!-- two disabled dropdown buttons -->
 <rect x="128" y="2.500" width="36" height="23" rx="3" fill="#737477" stroke="#808184" stroke-width="1"/>
 <rect x="167" y="2.500" width="36" height="23" rx="3" fill="#737477" stroke="#808184" stroke-width="1"/>
 <rect x="132" y="5" width="14" height="13" fill="#808184"/><path d="M134 10 L137 12.500 L140 8 L142 11.500 L145 9 L144 16 L135 16Z" fill="#909194"/>
 <path d="M151 10.500 L162 10.500 L156.500 16.500Z" fill="#5c5d60"/><path d="M145.500 18 L151.500 24 M151.500 18 L145.500 24" stroke="#5c5d60" stroke-width="1.800"/>
 <path d="M172 6 L172 21 L187 6Z M175 9 L175 14.500 L180.500 9Z" fill="#606164" fill-rule="evenodd"/><path d="M171 23.500 L190 4.500" stroke="#606164" stroke-width="1.200"/>
 <path d="M190 10.500 L201 10.500 L195.500 16.500Z" fill="#5c5d60"/><path d="M184.500 18 L190.500 24 M190.500 18 L184.500 24" stroke="#5c5d60" stroke-width="1.800"/>
</svg>

<!-- layer list -->
<div class="a" style="left:1157px;top:467px;width:204px;height:1px;background:#3f4043;"></div>
<div class="a" style="left:1157px;top:467px;width:3px;height:234px;background:#5b5c5f;border-left:1px solid #3a3a3c;border-right:1px solid #3a3a3c;box-sizing:border-box;"></div>
<div class="a" style="left:1205px;top:468px;width:141px;height:32px;background:linear-gradient(#6d8390,#5e737f);box-shadow:inset 0 0 0 1px #7a909c;"></div>
<div class="a" style="left:1160px;top:500px;width:187px;height:1px;background:#3f4043;"></div>
<div class="a" style="left:1160px;top:533px;width:187px;height:1px;background:#3f4043;"></div>
<div class="a" style="left:1183px;top:468px;width:1px;height:65px;background:#4a4b4e;"></div>
<div class="a" style="left:1204px;top:468px;width:1px;height:65px;background:#4a4b4e;"></div>
<div class="a" style="left:1347px;top:468px;width:12px;height:233px;background:#5c5d60;border-left:1px solid #505154;box-sizing:border-box;"></div>
<div class="a" style="left:1362px;top:415px;width:1px;height:311px;background:#38383a;"></div><div class="a" style="left:1364px;top:415px;width:1px;height:311px;background:#5a5b5e;"></div>

<div class="a" style="left:1157px;top:701px;width:203px;height:1px;background:#505154;"></div>
<!-- thumbnails -->
<div class="a" style="left:1209px;top:469px;width:38px;height:30px;box-sizing:border-box;border:1px solid #1a1a1c;box-shadow:inset 0 0 0 1px #7890a0,inset 0 0 0 2px #1a1a1c;background:#58595c;"></div>
<div class="a" style="left:1212px;top:475px;width:32px;height:18px;background-color:#fff;background-image:linear-gradient(45deg,#c8c8c8 25%,transparent 25%,transparent 75%,#c8c8c8 75%),linear-gradient(45deg,#c8c8c8 25%,transparent 25%,transparent 75%,#c8c8c8 75%);background-size:8px 8px;background-position:1px 1px,5px 5px;"></div>
<div class="a" style="left:1211px;top:504px;width:35px;height:26px;box-sizing:border-box;border:1.500px solid #141414;background:#fff;"></div>
<svg style="left:1251px;top:502px" width="24" height="25"><rect x=".5" y=".5" width="23" height="23.500" fill="#fff" stroke="#1e1e20" stroke-width="1.200"/><path d="M4.500 3.500 L14 3.500 L19.500 9 L19.500 22.500 L4.500 22.500Z" fill="url(#gDoc)" stroke="#3a3a3a" stroke-width="1"/><path d="M14 3.500 L14 9 L19.500 9" fill="#d4d4d4" stroke="#3a3a3a" stroke-width=".9"/></svg>
<div class="t" style="left:1250px;top:471px;font-size:11px;letter-spacing:.15px;">100 %&nbsp; 普通</div>
<div class="t" style="left:1250px;top:483px;font-size:11px;letter-spacing:.3px;">圖層 1</div>
<div class="t" style="left:1279px;top:516px;font-size:11.500px;">紙張</div>
<!-- eyes / pen -->
<svg style="left:1165px;top:479px" width="15" height="11"><path d="M.5 5.500 Q7.500 -2 14.500 5.500 Q7.500 12 .5 5.500Z" fill="#f4f4f4" stroke="#1e1e1e" stroke-width="1"/><circle cx="7.500" cy="5.200" r="3.300" fill="#141414"/><circle cx="6.500" cy="4.200" r=".9" fill="#fff"/></svg>
<svg style="left:1165px;top:511px" width="15" height="11"><path d="M.5 5.500 Q7.500 -2 14.500 5.500 Q7.500 12 .5 5.500Z" fill="#f4f4f4" stroke="#1e1e1e" stroke-width="1"/><circle cx="7.500" cy="5.200" r="3.300" fill="#141414"/><circle cx="6.500" cy="4.200" r=".9" fill="#fff"/></svg>
<svg style="left:1186px;top:477px" width="17" height="15"><path d="M15.500 1 Q16.500 3 13 8 L9 11.500 L7 9.500 Q9 5 15.500 1Z" fill="#1e1e1e"/><path d="M7 9.500 L9 11.500 L1 14.500Z" fill="#f0f0f0" stroke="#333" stroke-width=".5"/></svg>
<svg style="left:1156px;top:702px" width="210" height="26">
 <defs><linearGradient id="gMask" x1="0" y1="0" x2="1" y2="0"><stop offset="0" stop-color="#2e2e30"/><stop offset="1" stop-color="#8a8a8c"/></linearGradient>
 <linearGradient id="gFold" x1="0" y1="0" x2="1" y2="0"><stop offset="0" stop-color="#c4c4c6"/><stop offset="1" stop-color="#7c7d80"/></linearGradient></defs>
 <use href="#paper" x="16" y="1" width="19" height="23"/>
 <use href="#paper" x="39" y="2" width="17" height="20.500"/>
 <path d="M52 16.500 L57 15 L60 16 L60 21.500 L55 23 L52 22Z" fill="#f4f4f4" stroke="#3a3a3c" stroke-width=".7"/><path d="M52 16.500 L55 17.500 L60 16 M55 17.500 L55 23" fill="none" stroke="#3a3a3c" stroke-width=".6"/>
 <path d="M62 2.500 L71 2.500 L73 5 L82 5 L82 19.500 L62 19.500Z" fill="url(#gFold)" stroke="#6a6b6e" stroke-width=".6"/>
 <use href="#paper" x="74" y="9" width="11.500" height="14.500"/>
 <g fill="#5a5b5e"><path d="M89 9.500 L97.500 5 L106 9.500 L97.500 14Z"/><path d="M89 17.500 L97.500 13.500 L106 17.500 L97.500 22Z" opacity=".8"/></g><path d="M96 7 L99 7 L99 12 L101.500 12 L97.500 17 L93.500 12 L96 12Z" fill="#77787b"/>
 <path d="M112 8.500 L121.500 3.500 L131 8.500 L121.500 13.500Z" fill="#1c1c1e"/><path d="M112 8.500 L112 17 M131 8.500 L131 17" stroke="#1c1c1e" stroke-width="1" stroke-dasharray="1.500 1.200"/>
 <path d="M112 17.500 L121.500 12.500 L131 17.500 L121.500 22.500Z" fill="#fafafa"/><path d="M119.500 5.500 L123.500 5.500 L123.500 12 L126.500 12 L121.500 18.500 L116.500 12 L119.500 12Z" fill="#111" stroke="#fff" stroke-width=".7"/>
 <rect x="134" y="4.500" width="23" height="15" fill="url(#gMask)" stroke="#2a2a2c" stroke-width="1"/><circle cx="145.500" cy="12" r="4.600" fill="#fff"/>
 <g fill="#5c5d60"><path d="M161 1.500 L165 1.500 L165 16 L168.500 16 L163 23.500 L157.500 16 L161 16Z"/><path d="M166 4 L175 2.500 L180 9 L171 12Z" opacity=".85"/><path d="M168 13 L178 11 L182 17 L172 20Z" opacity=".7"/></g><ellipse cx="172.500" cy="6.500" rx="2.600" ry="1.600" fill="#7c7d80"/>
 <use href="#trash" x="183.500" y="1" width="19.500" height="22.500"/>
</svg>


<!-- bottom edge -->
<div class="a" style="left:0;top:725px;width:1366px;height:1px;background:#6f7073;"></div>
<div class="a" style="left:0;top:726px;width:1366px;height:1px;background:#48484a;"></div>
<div class="a" style="left:0;top:727px;width:1366px;height:1px;background:#0c0c0c;"></div>
<div class="a" style="left:299px;top:727px;width:768px;height:1px;background:linear-gradient(90deg,#b0b0b0,#c4c4c4 30%,#9a8c80 50%,#b5b5b5 75%,#dadada);"></div>
</body>
</html>
